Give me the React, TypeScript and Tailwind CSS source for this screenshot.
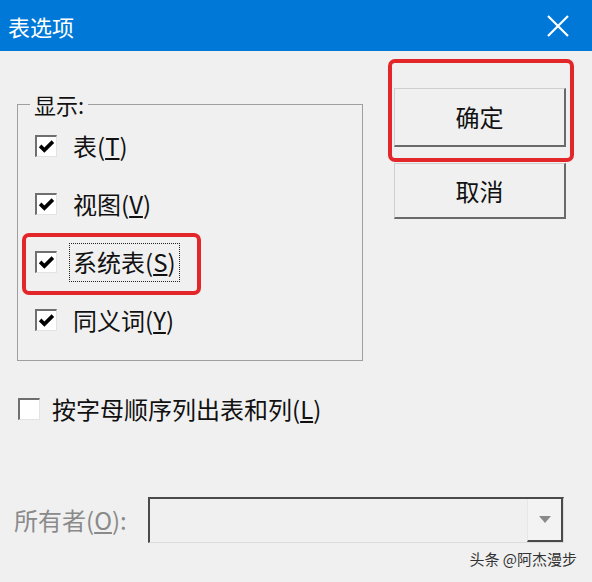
import React from "react"

function CheckBox({ checked = false }: { checked?: boolean }) {
  return (
    <span className="w-[22px] h-[22px] shrink-0 bg-white border-t-2 border-l-2 border-r border-b border-t-[#6f6f6f] border-l-[#6f6f6f] border-r-[#e3e3e3] border-b-[#e3e3e3] flex items-center justify-center">
      {checked && (
        <svg viewBox="0 0 16 16" className="w-[17px] h-[17px]">
          <path d="M2 7.4 L6 11.4 L14 3.4" stroke="#000" strokeWidth="3.4" fill="none" />
        </svg>
      )}
    </span>
  )
}

function Row({ label, keyChar, checked = true, focused = false }: { label: string; keyChar: string; checked?: boolean; focused?: boolean }) {
  return (
    <div className="h-[58px] flex items-center pl-[17px] relative">
      <CheckBox checked={checked} />
      <span
        className={
          focused
            ? "ml-[12px] px-[3px] h-[39px] flex items-center border border-dotted border-[#222]"
            : "ml-[16px] h-[39px] flex items-center"
        }
      >
        {label}(<u>{keyChar}</u>)
      </span>
      {focused && (
        <div className="absolute left-[4px] top-[0px] w-[179px] h-[62px] border-4 border-[#e3262a] rounded-[7px]" />
      )}
    </div>
  )
}

function WinButton({ children, className = "" }: { children: React.ReactNode; className?: string }) {
  return (
    <button className={"w-[172px] bg-[#f0f0f0] border-t border-l border-t-[#cfcfcf] border-l-[#cfcfcf] border-r-2 border-b-2 border-r-[#6a6a6a] border-b-[#6a6a6a] text-[24px] text-[#111] flex items-center justify-center " + className}>
      {children}
    </button>
  )
}

export default function App() {
  return (
    <div className="w-[592px] h-[582px] bg-[#f0f0f0] overflow-hidden font-['Noto_Sans_CJK_SC','Noto_Sans',sans-serif] text-[#111] flex flex-col">
      {/* title bar */}
      <div className="h-[51px] shrink-0 bg-[#0078d7] flex items-center justify-between pl-[8px] pr-[22px]">
        <span className="text-white text-[22px] leading-none">表选项</span>
        <svg viewBox="0 0 24 24" className="w-[24px] h-[24px]">
          <path d="M2 2 L22 22 M22 2 L2 22" stroke="#fff" strokeWidth="2.2" fill="none" />
        </svg>
      </div>

      {/* top area: group + buttons */}
      <div className="flex">
        <div className="ml-[17px] mt-[53px] w-[346px] h-[257px] border border-[#9f9f9f] relative pt-[12px]">
          <span className="absolute left-[12px] -top-[16px] px-[4px] bg-[#f0f0f0] text-[22px] leading-[30px]">显示:</span>
          <div className="text-[24px] leading-none">
            <Row label="表" keyChar="T" />
            <Row label="视图" keyChar="V" />
            <Row label="系统表" keyChar="S" focused />
            <Row label="同义词" keyChar="Y" />
          </div>
        </div>

        <div className="ml-[31px] mt-[37px] flex flex-col gap-[16px]">
          <div className="relative">
            <WinButton className="h-[59px]">确定</WinButton>
            <div className="absolute -left-[6px] -top-[29px] w-[186px] h-[103px] border-4 border-[#e3262a] rounded-[7px]" />
          </div>
          <WinButton className="h-[56px]">取消</WinButton>
        </div>
      </div>

      {/* sort checkbox */}
      <div className="mt-[36px] ml-[18px] flex items-center text-[24px] leading-none">
        <CheckBox />
        <span className="ml-[12px]">按字母顺序列出表和列(<u>L</u>)</span>
      </div>

      {/* owner */}
      <div className="mt-[76px] flex items-center">
        <span className="ml-[14px] w-[134px] text-[24px] leading-none text-[#8a8a8a]">
          所有者(<u>O</u>):
        </span>
        <div className="w-[416px] h-[46px] bg-[#f0f0f0] border-t-2 border-l-2 border-t-[#4a4a4a] border-l-[#4a4a4a] border-r border-b border-r-[#dcdcdc] border-b-[#dcdcdc] flex justify-end">
          <div className="w-[36px] h-full bg-[#f3f3f3] border-r-2 border-b-2 border-r-[#4a4a4a] border-b-[#4a4a4a] border-l border-l-[#e6e6e6] flex items-center justify-center">
            <svg viewBox="0 0 12 8" className="w-[12px] h-[8px]">
              <path d="M0 0 L12 0 L6 7 Z" fill="#8a8a8a" />
            </svg>
          </div>
        </div>
      </div>

      {/* watermark */}
      <div className="mt-[8px] pr-[15px] flex justify-end text-[15px] leading-none text-[#333]">
        头条 @阿杰漫步
      </div>
    </div>
  )
}
